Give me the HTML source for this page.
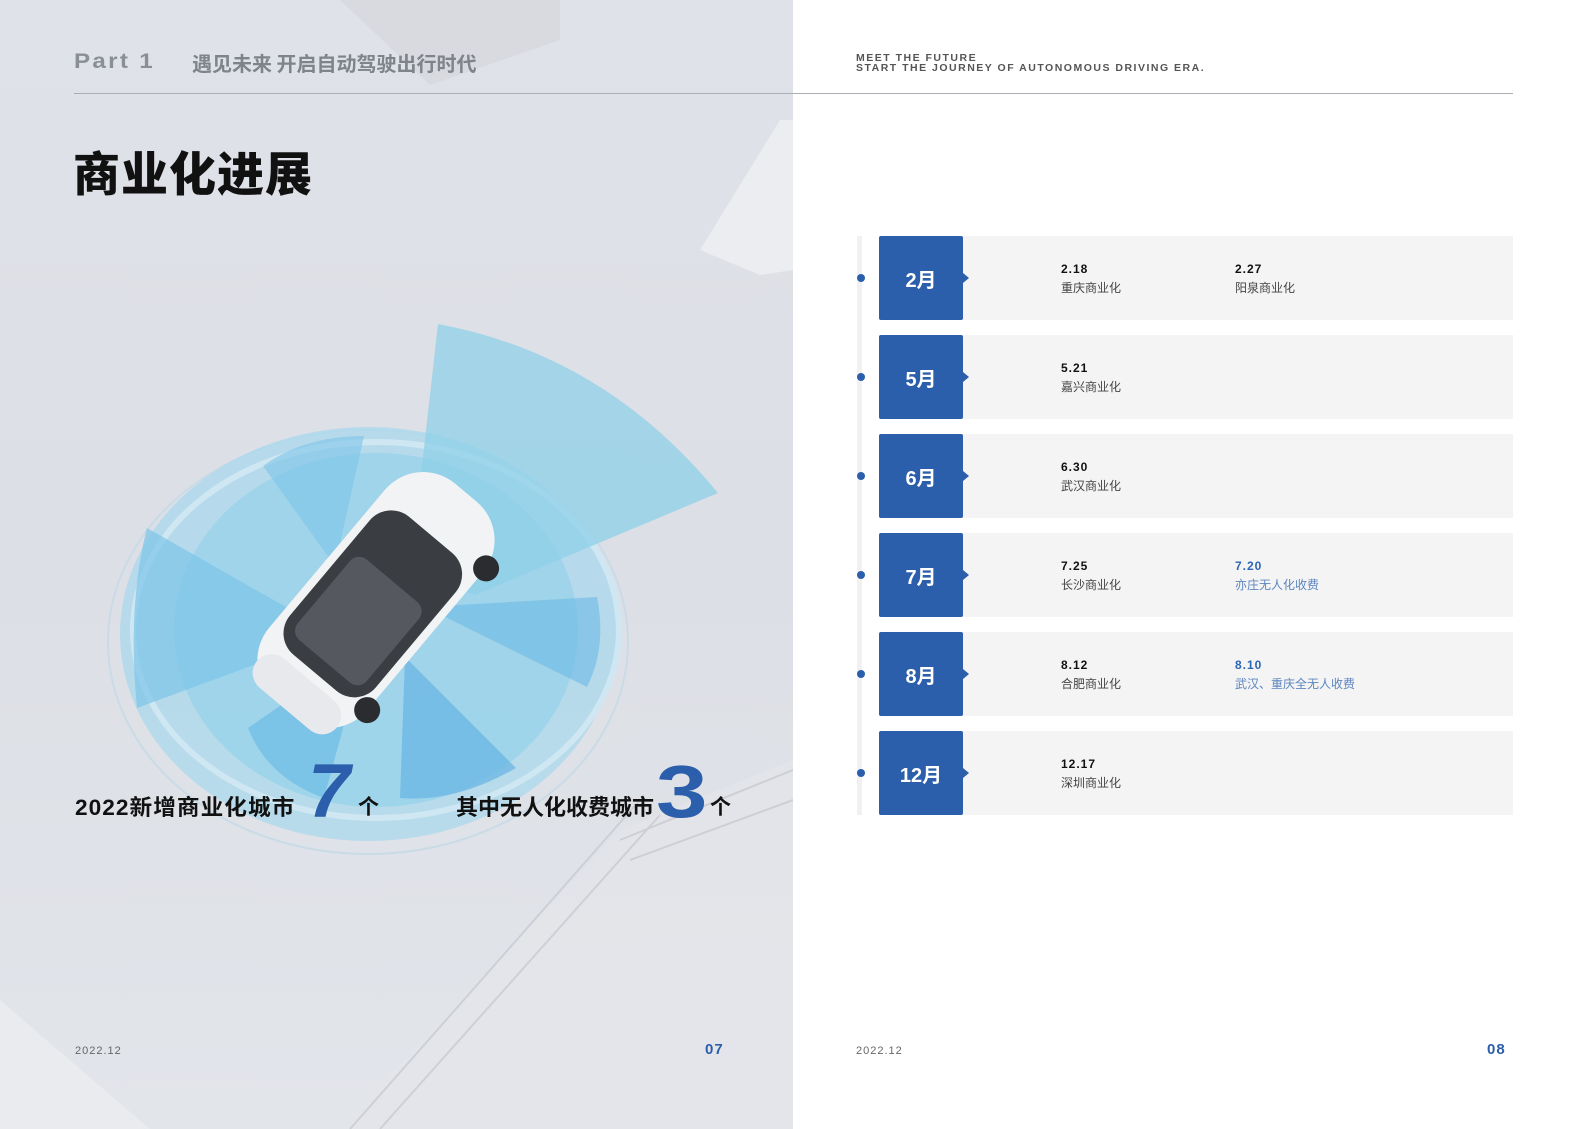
<!DOCTYPE html>
<html><head><meta charset="utf-8"><style>
*{margin:0;padding:0;box-sizing:border-box}
body{width:1587px;height:1129px;position:relative;background:#fff;font-family:"Liberation Sans","Noto Sans CJK SC",sans-serif;overflow:hidden}
.left{position:absolute;left:0;top:0;width:793px;height:1129px;background:linear-gradient(180deg,#dfe2e8 0%,#dcdfe5 50%,#e2e5ea 100%);overflow:hidden}
.abs{position:absolute}
.hr{position:absolute;top:93px;height:1px;background:#a9adb4}
.row{position:absolute;left:879px;width:634px;height:84px;background:#f4f4f4}
.mon{position:absolute;left:0;top:0;width:84px;height:84px;background:#2b5eab;color:#fff;font-weight:bold;font-size:20px;display:flex;align-items:center;justify-content:center;border-radius:2px}
.mon:after{content:"";position:absolute;right:-6px;top:37px;border-left:6px solid #2b5eab;border-top:5px solid transparent;border-bottom:5px solid transparent}
.it{position:absolute;top:24px;font-size:12px;line-height:19px;color:#444}
.it b{display:block;color:#111;letter-spacing:1px;font-size:12px}
.blue,.blue b{color:#2b66b4!important}
.blue{color:#5c85bf!important}
.dot{position:absolute;left:857px;width:8px;height:8px;border-radius:50%;background:#2b5eab}
.wide{font-family:"Liberation Sans",sans-serif;font-weight:bold;letter-spacing:2px}
</style></head><body>
<div class="left">
<svg class="abs" style="left:0;top:0" width="793" height="1129">
 <path d="M700 250 L780 120 L793 120 L793 270 L760 275 Z" fill="#eceef1" opacity=".9"/>
 <path d="M340 0 L430 85 L560 40 L560 0 Z" fill="#d3d6db" opacity=".6"/>
 <path d="M340 1129 L620 830 L793 760 L793 1129 Z" fill="#e4e6ea" opacity=".7"/>
 <g stroke="#c8cbd1" stroke-width="2" opacity=".8">
  <path d="M350 1129 L640 800"/><path d="M380 1129 L660 815"/><path d="M620 840 L793 770"/><path d="M630 860 L793 800"/>
 </g>
 <path d="M0 1000 L150 1129 L0 1129 Z" fill="#e9ebee"/>
 <ellipse cx="368" cy="642" rx="260" ry="212" fill="none" stroke="#c9dbe6" stroke-width="2"/>
 <ellipse cx="368" cy="634" rx="248" ry="207" fill="#a9d8ec" opacity=".75"/>
 <ellipse cx="376" cy="630" rx="202" ry="177" fill="#8fd0ea" opacity=".6"/>
 <ellipse cx="376" cy="630" rx="243" ry="188" fill="none" stroke="#cfe7f2" stroke-width="6"/>
 <path d="M410 572 L438 324 Q605 355 718 493 L475 595 Z" fill="#8fd0e8" opacity=".75"/>
 <path d="M335 635 L147 528 Q127 606 137 708 Z" fill="#7cc4e8" opacity=".7"/>
 <path d="M365 647 L248 728 Q268 778 324 798 Z" fill="#6cbbe6" opacity=".7"/>
 <path d="M405 657 L400 798 Q455 803 516 768 Z" fill="#66b4e4" opacity=".7"/>
 <path d="M425 607 L597 597 Q607 647 587 687 Z" fill="#6db9e5" opacity=".6"/>
 <path d="M335 566 L263 466 Q304 436 364 436 Z" fill="#7dc5e8" opacity=".6"/>
 <g transform="translate(376,600) rotate(-50)">
  <rect x="-140" y="-64" width="280" height="128" rx="50" fill="#f2f3f5"/>
  <rect x="-95" y="-56" width="180" height="112" rx="28" fill="#3a3d42"/>
  <rect x="-80" y="-45" width="105" height="90" rx="12" fill="#55585e"/>
  <rect x="-142" y="-52" width="38" height="104" rx="19" fill="#e7e9ec"/>
  <circle cx="-90" cy="64" r="13" fill="#2a2c30"/><circle cx="95" cy="64" r="13" fill="#2a2c30"/>
 </g>
</svg>
<div class="abs wide" style="left:74px;top:50px;font-size:21px;color:#8a8e95;transform:scaleX(1.15);transform-origin:left">Part 1</div>
<div class="abs" style="left:192px;top:48px;font-size:20px;color:#7f838a;font-weight:bold;font-family:'Noto Sans CJK SC',sans-serif">遇见未来 开启自动驾驶出行时代</div>
<div class="abs" style="left:73px;top:136px;font-size:47px;color:#111;font-weight:900;font-family:'Noto Sans CJK SC',sans-serif;letter-spacing:1px">商业化进展</div>
<div class="abs" style="left:75px;top:790px;font-size:22px;color:#111;font-weight:bold;font-family:'Liberation Sans','Noto Sans CJK SC',sans-serif;letter-spacing:1px;transform:scaleX(1.03);transform-origin:left">2022新增商业化城市</div>
<div class="abs" style="left:308px;top:752px;font-size:76px;line-height:80px;color:#2b5eab;font-weight:bold;font-style:italic">7</div>
<div class="abs" style="left:358px;top:791px;font-size:21px;color:#111;font-weight:bold;font-family:'Noto Sans CJK SC',sans-serif">个</div>
<div class="abs" style="left:456px;top:790px;font-size:22px;color:#111;font-weight:bold;font-family:'Noto Sans CJK SC',sans-serif">其中无人化收费城市</div>
<div class="abs" style="left:656px;top:752px;font-size:74px;line-height:80px;color:#2b5eab;font-weight:900;transform:scaleX(1.25);transform-origin:left">3</div>
<div class="abs" style="left:710px;top:791px;font-size:21px;color:#111;font-weight:bold;font-family:'Noto Sans CJK SC',sans-serif">个</div>
<div class="abs" style="left:75px;top:1045px;font-size:11px;color:#666;letter-spacing:1px">2022.12</div>
<div class="abs" style="left:705px;top:1041px;font-size:15px;color:#2b5eab;font-weight:bold;letter-spacing:1px">07</div>
</div>
<div class="hr" style="left:74px;width:1439px"></div>
<div class="abs" style="left:856px;top:53px;font-size:10.5px;line-height:10px;color:#555;letter-spacing:1.5px;font-weight:bold">MEET THE FUTURE<br>START THE JOURNEY OF AUTONOMOUS DRIVING ERA.</div>
<div class="abs" style="left:857px;top:236px;width:5px;height:579px;background:#f1f1f1"></div>

<div class="dot" style="top:274px"></div>
<div class="row" style="top:236px"><div class="mon">2月</div>
 <div class="it" style="left:182px"><b>2.18</b>重庆商业化</div>
 <div class="it" style="left:356px"><b>2.27</b>阳泉商业化</div></div>
<div class="dot" style="top:373px"></div>
<div class="row" style="top:335px"><div class="mon">5月</div>
 <div class="it" style="left:182px"><b>5.21</b>嘉兴商业化</div></div>
<div class="dot" style="top:472px"></div>
<div class="row" style="top:434px"><div class="mon">6月</div>
 <div class="it" style="left:182px"><b>6.30</b>武汉商业化</div></div>
<div class="dot" style="top:571px"></div>
<div class="row" style="top:533px"><div class="mon">7月</div>
 <div class="it" style="left:182px"><b>7.25</b>长沙商业化</div>
 <div class="it blue" style="left:356px"><b>7.20</b>亦庄无人化收费</div></div>
<div class="dot" style="top:670px"></div>
<div class="row" style="top:632px"><div class="mon">8月</div>
 <div class="it" style="left:182px"><b>8.12</b>合肥商业化</div>
 <div class="it blue" style="left:356px"><b>8.10</b>武汉、重庆全无人收费</div></div>
<div class="dot" style="top:769px"></div>
<div class="row" style="top:731px"><div class="mon">12月</div>
 <div class="it" style="left:182px"><b>12.17</b>深圳商业化</div></div>

<div class="abs" style="left:856px;top:1045px;font-size:11px;color:#666;letter-spacing:1px">2022.12</div>
<div class="abs" style="left:1487px;top:1041px;font-size:15px;color:#2b5eab;font-weight:bold;letter-spacing:1px">08</div>
</body></html>
